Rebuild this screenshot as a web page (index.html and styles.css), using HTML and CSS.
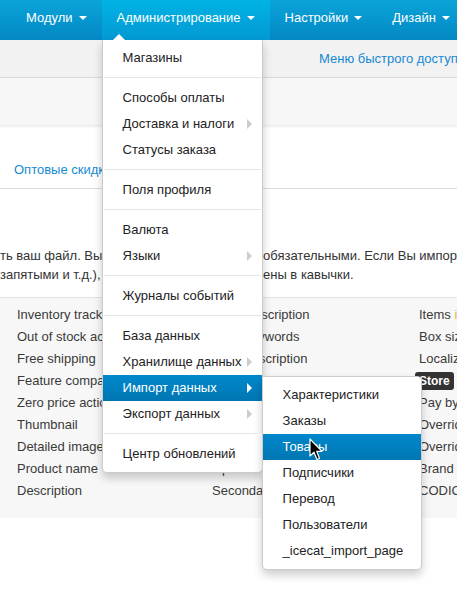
FILE: index.html
```html
<!DOCTYPE html>
<html lang="ru">
<head>
<meta charset="utf-8">
<title>Импорт данных</title>
<link rel="stylesheet" href="styles.css">
</head>
<body>
<div class="page">
  <nav class="topnav">
    <div class="nav-item">Модули<span class="caret"></span></div>
    <div class="nav-item active">Администрирование<span class="caret"></span>
      <ul class="menu main-menu">
        <li>Магазины</li>
        <li class="divider"></li>
        <li>Способы оплаты</li>
        <li class="sub">Доставка и налоги<span class="arrow"></span></li>
        <li>Статусы заказа</li>
        <li class="divider"></li>
        <li>Поля профиля</li>
        <li class="divider"></li>
        <li>Валюта</li>
        <li class="sub">Языки<span class="arrow"></span></li>
        <li class="divider"></li>
        <li>Журналы событий</li>
        <li class="divider"></li>
        <li>База данных</li>
        <li class="sub">Хранилище данных<span class="arrow"></span></li>
        <li class="sub active">Импорт данных<span class="arrow"></span>
          <ul class="menu submenu">
            <li>Характеристики</li>
            <li>Заказы</li>
            <li class="active">Товары</li>
            <li>Подписчики</li>
            <li>Перевод</li>
            <li>Пользователи</li>
            <li>_icecat_import_page</li>
          </ul>
        </li>
        <li class="sub">Экспорт данных<span class="arrow"></span></li>
        <li class="divider"></li>
        <li>Центр обновлений</li>
      </ul>
    </div>
    <div class="nav-item">Настройки<span class="caret"></span></div>
    <div class="nav-item">Дизайн<span class="caret"></span></div>
  </nav>

  <div class="quickbar"><a class="link">Меню быстрого доступа</a></div>
  <div class="titlebar"></div>

  <div class="tabs"><a class="link">Оптовые скидки</a></div>

  <div class="intro">
    <div class="intro-line"><span class="intro-a">ть ваш файл. Выделенные поля являются</span><span class="intro-b">обязательными. Если Вы импортируете</span></div>
    <div class="intro-line"><span class="intro-a">запятыми и т.д.), они должны быть заключ</span><span class="intro-b">ены в кавычки.</span></div>
  </div>

  <div class="fields">
    <div class="col">
      <div>Inventory tracking</div>
      <div>Out of stock actions</div>
      <div>Free shipping</div>
      <div>Feature comparison</div>
      <div>Zero price action</div>
      <div>Thumbnail</div>
      <div>Detailed image</div>
      <div>Product name</div>
      <div>Description</div>
    </div>
    <div class="col">
      <div>Short description</div>
      <div>Meta keywords</div>
      <div>Meta description</div>
      <div>Search words</div>
      <div>Page title</div>
      <div>Promo text</div>
      <div>Taxes</div>
      <div>Options</div>
      <div>Secondary categories</div>
    </div>
    <div class="col">
      <div>Items <span class="hint">in box</span></div>
      <div>Box size</div>
      <div>Localizations</div>
      <div><span class="badge">Store</span></div>
      <div>Pay by points</div>
      <div>Override points</div>
      <div>Override exchange rate</div>
      <div>Brand</div>
      <div>CODICE EAN</div>
    </div>
  </div>
</div>

<svg class="cursor" width="14" height="24" viewBox="0 0 14 24" aria-hidden="true">
  <path d="M1 1 L1 18 L5 14.2 L8 21.5 L10.6 20.4 L7.7 13.3 L13 13.3 Z" fill="#000" stroke="#fff" stroke-width="1.2" stroke-linejoin="round"/>
</svg>
</body>
</html>
```

FILE: styles.css
```css
html, body {
  margin: 0;
  padding: 0;
}

body {
  font-family: "Liberation Sans", Arial, sans-serif;
  font-size: 13px;
  color: #333;
  background: #fff;
  width: 457px;
  height: 591px;
  overflow: hidden;
  position: relative;
}

.page {
  width: 457px;
  overflow: hidden;
  height: 591px;
}

/* ---------- top navigation ---------- */
.topnav {
  display: flex;
  height: 40px;
  padding-left: 11px;
  background: linear-gradient(#0aa4d9, #0388c4);
  position: relative;
  z-index: 5;
}

.nav-item {
  flex: none;
  position: relative;
  padding: 0 15px 4px;
  line-height: 36px;
  color: #fff;
  white-space: nowrap;
}

.nav-item.active {
  background: linear-gradient(#01b3e4, #0399d3);
}

.caret {
  display: inline-block;
  width: 0;
  height: 0;
  margin-left: 6px;
  vertical-align: middle;
  border-top: 4px solid #fff;
  border-left: 4px solid transparent;
  border-right: 4px solid transparent;
  position: relative;
  top: -1px;
}

/* ---------- dropdown menus ---------- */
.menu {
  list-style: none;
  margin: 0;
  padding: 5px 0;
  background: #fff;
  border: 1px solid rgba(0, 0, 0, 0.2);
  box-shadow: 0 5px 10px rgba(0, 0, 0, 0.2);
  line-height: 20px;
  font-size: 13px;
  box-sizing: border-box;
}

.main-menu {
  position: absolute;
  top: 40px;
  left: 0;
  width: 161px;
  border-top: 0;
  border-radius: 0 0 5px 5px;
}

.main-menu::before {
  content: "";
  position: absolute;
  top: -6px;
  left: 10px;
  border-left: 6px solid transparent;
  border-right: 6px solid transparent;
  border-bottom: 6px solid #fff;
}

.menu li {
  position: relative;
  padding: 3px 20px;
  color: #222;
  white-space: nowrap;
}

.menu li.sub {
  display: flex;
  align-items: center;
}

.menu li.active {
  color: #fff;
  background: linear-gradient(#0088cc, #0076b2);
}

.menu li.divider {
  height: 1px;
  padding: 0;
  margin: 6px 1px;
  background: #e5e5e5;
  border-bottom: 1px solid #fff;
}

.arrow {
  margin-left: auto;
  margin-right: -10px;
  width: 0;
  height: 0;
  border-top: 5px solid transparent;
  border-bottom: 5px solid transparent;
  border-left: 5px solid #ccc;
}

.menu li.active .arrow {
  border-left-color: #fff;
}

.submenu {
  position: absolute;
  top: 1px;
  left: 100%;
  width: 160px;
  border-radius: 0 5px 5px 5px;
}

/* ---------- bars under nav ---------- */
.quickbar {
  height: 37px;
  line-height: 37px;
  background: #f2f2f2;
  border-bottom: 1px solid #dedede;
  padding-left: 319px;
  white-space: nowrap;
}

.link {
  color: #1689d3;
  text-decoration: none;
}

.titlebar {
  height: 47px;
  background: #f7f7f7;
  box-shadow: 0 1px 3px rgba(0, 0, 0, 0.12);
  position: relative;
  z-index: 1;
}

.tabs {
  padding: 35px 0 8px 14px;
  line-height: 20px;
  border-bottom: 1px solid #dcdcdc;
  white-space: nowrap;
}

/* ---------- intro text ---------- */
.intro {
  margin: 57px 0 13px;
  line-height: 19px;
  color: #333;
}

.intro-line {
  display: flex;
  white-space: nowrap;
}

.intro-a {
  flex: none;
  width: 263px;
  overflow: hidden;
}

.intro-b {
  flex: none;
}

/* ---------- fields panel ---------- */
.fields {
  display: grid;
  grid-template-columns: 195px 207px 1fr;
  background: #f7f7f7;
  border-top: 1px solid #e2e2e2;
  padding: 6px 0 16px 17px;
  color: #3a3a3a;
}

.col > div {
  height: 22px;
  line-height: 22px;
  white-space: nowrap;
}

.hint {
  color: #f0ad4e;
}

.badge {
  display: inline-block;
  margin-left: -4px;
  padding: 0 4px;
  height: 18px;
  line-height: 18px;
  font-size: 12px;
  font-weight: bold;
  color: #fff;
  background: #333;
  border-radius: 3px;
}

/* ---------- mouse pointer overlay ---------- */
.cursor {
  position: absolute;
  left: 309px;
  top: 438px;
  z-index: 10;
}
```
